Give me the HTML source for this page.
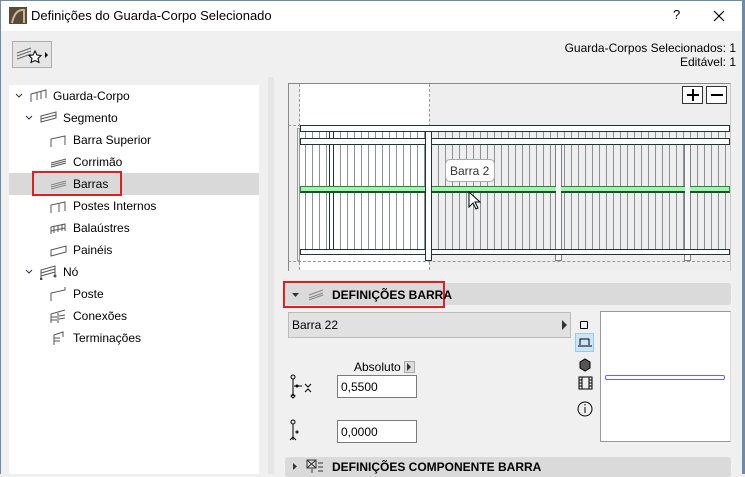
<!DOCTYPE html>
<html><head><meta charset="utf-8"><style>
*{margin:0;padding:0;box-sizing:border-box}
body{width:745px;height:474px;overflow:hidden;background:#f0f0f0;font-family:"Liberation Sans",sans-serif;font-size:12px;color:#000;position:relative}
.a{position:absolute}
.t{position:absolute;white-space:nowrap}
.ic{position:absolute;width:18px;height:16px;fill:none;stroke:#555}
</style></head><body>
<div class="a" style="left:0;top:0;width:745px;height:31px;background:#fff"></div>
<div class="a" style="left:0;top:0;width:1px;height:474px;background:#6d8aa8"></div>
<div class="a" style="right:0;top:0;width:3px;height:474px;background:#6d8aa8"></div>
<div class="a" style="left:0;top:0;width:745px;height:1px;background:#6d8aa8"></div>
<svg class="a" style="left:9px;top:7px" width="18" height="17"><rect width="18" height="17" fill="#5a4a3a"/><path d="M3 16 Q6 2 15 3 L15 16" fill="none" stroke="#c8b89a" stroke-width="2"/></svg>
<div class="t" style="left:31px;top:8px;font-size:13px">Definições do Guarda-Corpo Selecionado</div>
<div class="t" style="left:673px;top:7px;font-size:13px">?</div>
<svg class="a" style="left:713px;top:10px" width="12" height="12"><path d="M1 1L11 11M11 1L1 11" stroke="#000" stroke-width="1.2"/></svg>
<div class="a" style="left:12px;top:41px;width:40px;height:27px;border:1px solid #adadad;background:#e5e5e5"></div>
<svg class="a" style="left:16px;top:45px" width="34" height="20"><path d="M1 8L15 3M1 11L15 6M1 14L15 9" stroke="#666" fill="none"/><path d="M19 6l2 4 4 .5-3 3 1 4-4-2-4 2 1-4-3-3 4-.5z" fill="#fff" stroke="#000"/><path d="M29 7l3 3-3 3z" fill="#000"/></svg>
<div class="t" style="right:9px;top:41px">Guarda-Corpos Selecionados: 1</div>
<div class="t" style="right:9px;top:55px">Editável: 1</div>
<!-- tree -->
<div class="a" style="left:9px;top:85px;width:250px;height:389px;background:#fff"></div>
<div class="a" style="left:9px;top:173px;width:250px;height:22px;background:#d9d9d9"></div>
<div class="a" style="left:32px;top:171px;width:90px;height:25px;border:2px solid #e02020"></div>
<div class="a" style="left:268px;top:77px;width:6px;height:397px;background:#e6e6e6"></div>
<svg class="ic" style="left:14px;top:88px;width:10px"><path d="M2 6l3 3 3-3" stroke="#333"/></svg>
<svg class="ic" style="left:24px;top:110px;width:10px"><path d="M2 6l3 3 3-3" stroke="#333"/></svg>
<svg class="ic" style="left:24px;top:264px;width:10px"><path d="M2 6l3 3 3-3" stroke="#333"/></svg>
<svg class="ic" style="left:30px;top:88px"><path d="M1 14V6l15-4v8M1 6l15-4M7 5v7M11 4v7"/></svg>
<svg class="ic" style="left:40px;top:110px"><path d="M1 12l15-4V2L1 6zM1 9l15-4"/></svg>
<svg class="ic" style="left:50px;top:132px"><path d="M1 15V7l14-3v9"/></svg>
<svg class="ic" style="left:50px;top:154px"><path d="M1 13l15-4M1 11l15-4M1 9l15-4"/></svg>
<svg class="ic" style="left:50px;top:176px"><path d="M1 13l15-4M1 11l15-4M1 9l15-4" stroke="#888"/></svg>
<svg class="ic" style="left:50px;top:198px"><path d="M1 15V7l14-3v9M9 6v8"/></svg>
<svg class="ic" style="left:50px;top:220px"><path d="M1 14V7l14-3v7M4 13V6M8 12V5M12 11V4M1 11l14-3"/></svg>
<svg class="ic" style="left:50px;top:242px"><path d="M1 14l15-4V4L1 8z"/></svg>
<svg class="ic" style="left:40px;top:264px"><path d="M1 14V6l14-4v10M1 9l14-4M1 12l14-4"/><circle cx="1" cy="15" r="1" fill="#333"/><circle cx="15" cy="12" r="1" fill="#333"/></svg>
<svg class="ic" style="left:50px;top:286px"><path d="M1 15V7l14-3V1"/></svg>
<svg class="ic" style="left:50px;top:308px"><path d="M1 15V6l14-4M8 15V5M1 9h6M1 12h6M9 8l6-1M9 11l6-1"/></svg>
<svg class="ic" style="left:50px;top:330px"><path d="M4 15V5l9-3v5M4 8h6M4 11h6"/></svg>
<div class="t" style="left:53px;top:89px">Guarda-Corpo</div>
<div class="t" style="left:63px;top:111px">Segmento</div>
<div class="t" style="left:73px;top:133px">Barra Superior</div>
<div class="t" style="left:73px;top:155px">Corrimão</div>
<div class="t" style="left:73px;top:177px">Barras</div>
<div class="t" style="left:73px;top:199px">Postes Internos</div>
<div class="t" style="left:73px;top:221px">Balaústres</div>
<div class="t" style="left:73px;top:243px">Painéis</div>
<div class="t" style="left:63px;top:265px">Nó</div>
<div class="t" style="left:73px;top:287px">Poste</div>
<div class="t" style="left:73px;top:309px">Conexões</div>
<div class="t" style="left:73px;top:331px">Terminações</div>
<!-- preview -->
<div class="a" style="left:288px;top:83px;width:443px;height:188px;background:#eeeeee;border-top:1px solid #888;border-left:1px solid #888;border-right:1px solid #ccc"></div>
<div class="a" style="left:300px;top:84px;width:130px;height:186px;background:#fff"></div>
<div class="a" style="left:299px;top:84px;height:186px;border-left:1px dashed #999"></div>
<div class="a" style="left:429px;top:84px;height:186px;border-left:1px dashed #999"></div>
<div class="a" style="left:288px;top:125px;width:442px;border-top:1px dashed #999"></div>
<div class="a" style="left:288px;top:261px;width:442px;border-top:1px dashed #999"></div>
<div class="a" style="left:297px;top:128px;width:3px;height:133px;border:1px solid #999;background:#eee"></div>
<div class="a" style="left:300px;top:131px;width:430px;height:120px;background:repeating-linear-gradient(90deg,#eee 0 5px,#8a9198 5px 6px,#eee 6px 7px)"></div>
<div class="a" style="left:300px;top:131px;width:130px;height:120px;background:repeating-linear-gradient(90deg,#fff 0 5px,#8a9198 5px 6px,#fff 6px 7px)"></div>
<div class="a" style="left:329px;top:131px;width:1px;height:120px;background:#233"></div>
<div class="a" style="left:333px;top:131px;width:1px;height:120px;background:#233"></div>
<div class="a" style="left:555px;top:144px;width:7px;height:117px;background:#f6f6f6;border:1px solid #7a8288"></div>
<div class="a" style="left:684px;top:144px;width:7px;height:117px;background:#f6f6f6;border:1px solid #7a8288"></div>
<div class="a" style="left:300px;top:125px;width:430px;height:7px;background:#fff;border:1px solid #233"></div>
<div class="a" style="left:300px;top:138px;width:430px;height:7px;background:#fff;border:1px solid #233"></div>
<div class="a" style="left:300px;top:186px;width:430px;height:7px;background:#a8f0b0;border:1px solid #1e8a3a;border-bottom:2px solid #0c5a20"></div>
<div class="a" style="left:556px;top:186px;width:5px;height:7px;background:#f6f6f6"></div>
<div class="a" style="left:685px;top:186px;width:5px;height:7px;background:#f6f6f6"></div>
<div class="a" style="left:300px;top:249px;width:430px;height:6px;background:#fff;border:1px solid #233"></div>
<div class="a" style="left:425px;top:131px;width:7px;height:130px;background:#fff;border:1px solid #233"></div>
<div class="a" style="left:445px;top:159px;width:50px;height:23px;background:#fff;border:1px solid #aaa;border-radius:5px"></div>
<div class="t" style="left:450px;top:164px;color:#333">Barra 2</div>
<svg class="a" style="left:468px;top:191px" width="14" height="20"><path d="M1 1v15l4-4 3 6 2-1-3-6h5z" fill="#fff" stroke="#000"/></svg>
<div class="a" style="left:682px;top:86px;width:21px;height:18px;border:1px solid #333;background:#fff"></div>
<div class="a" style="left:706px;top:86px;width:21px;height:18px;border:1px solid #333;background:#fff"></div>
<svg class="a" style="left:682px;top:86px" width="46" height="18"><path d="M5 9h12M11 3v12M29 9h12" stroke="#000" stroke-width="2"/></svg>
<!-- settings header -->
<div class="a" style="left:285px;top:283px;width:446px;height:22px;background:#dadada;border-radius:3px"></div>
<div class="a" style="left:283px;top:281px;width:162px;height:27px;border:2px solid #e02020"></div>
<svg class="a" style="left:291px;top:289px" width="40" height="12"><path d="M1 4h7l-3.5 4z" fill="#333"/><path d="M18 9l14-5M18 6l14-5M18 11l14-5" stroke="#888" fill="none"/></svg>
<div class="t" style="left:332px;top:288px;font-weight:bold">DEFINIÇÕES BARRA</div>
<div class="a" style="left:288px;top:312px;width:283px;height:26px;background:#e1e1e1;border:1px solid #bbb"></div>
<div class="t" style="left:292px;top:318px">Barra 22</div>
<svg class="a" style="left:562px;top:320px" width="6" height="10"><path d="M0 0l5 5-5 5z" fill="#333"/></svg>
<div class="a" style="left:580px;top:321px;width:8px;height:8px;border:1px solid #000;border-radius:1px"></div>
<div class="a" style="left:575px;top:333px;width:19px;height:19px;background:#cce4f7;border:1px solid #99c9ef"></div>
<svg class="a" style="left:576px;top:334px" width="18" height="90" fill="none" stroke="#000"><path d="M4 11V5h9v6M2 12h14"/><path d="M4 28l5-3 5 3v6l-5 3-5-3z" fill="#555"/><path d="M3 43h13v12H3zM6 43v12M3 46h3M3 49h3M3 52h3M13 43v12M13 46h3M13 49h3M13 52h3"/><circle cx="9" cy="75" r="7"/><path d="M9 73v6M9 70v1.5"/></svg>
<div class="a" style="left:600px;top:311px;width:131px;height:131px;background:#fff;border:1px solid #999;border-right-color:#ddd"></div>
<div class="a" style="left:605px;top:375px;width:120px;height:5px;border:1px solid #6666ee;border-radius:2px"></div>
<div class="t" style="left:354px;top:360px">Absoluto</div>
<div class="a" style="left:404px;top:361px;width:11px;height:12px;background:#ddd;border:1px solid #aaa"></div>
<svg class="a" style="left:406px;top:363px" width="6" height="8"><path d="M1 0l4 4-4 4z" fill="#333"/></svg>
<div class="a" style="left:337px;top:375px;width:80px;height:23px;background:#fff;border:1px solid #7a7a7a"></div>
<div class="t" style="left:341px;top:380px">0,5500</div>
<div class="a" style="left:337px;top:420px;width:80px;height:23px;background:#fff;border:1px solid #7a7a7a"></div>
<div class="t" style="left:341px;top:425px">0,0000</div>
<svg class="a" style="left:287px;top:374px" width="30" height="70" fill="none" stroke="#000"><circle cx="6" cy="3" r="2"/><path d="M6 5v17M7 12h8M18 10l3 3 3-3M18 18l3-3 3 3"/><circle cx="10" cy="12" r="1"/><path d="M4 22l2 2 2-2-2-2z"/><circle cx="6" cy="48" r="2"/><path d="M6 50v16M3 66l3-3 3 3"/><circle cx="10" cy="58" r="1"/></svg>
<div class="a" style="left:285px;top:457px;width:446px;height:20px;background:#dadada;border-radius:3px"></div>
<svg class="a" style="left:291px;top:459px" width="40" height="15"><path d="M2 4l4 3.5-4 3.5z" fill="#333"/><rect x="16" y="1" width="9" height="8" stroke="#333" fill="none"/><path d="M16 1l9 8M25 1l-9 8M21 10v4M27 4h5M27 8h5M27 12h5" stroke="#333"/></svg>
<div class="t" style="left:332px;top:460px;font-weight:bold">DEFINIÇÕES COMPONENTE BARRA</div>
</body></html>
